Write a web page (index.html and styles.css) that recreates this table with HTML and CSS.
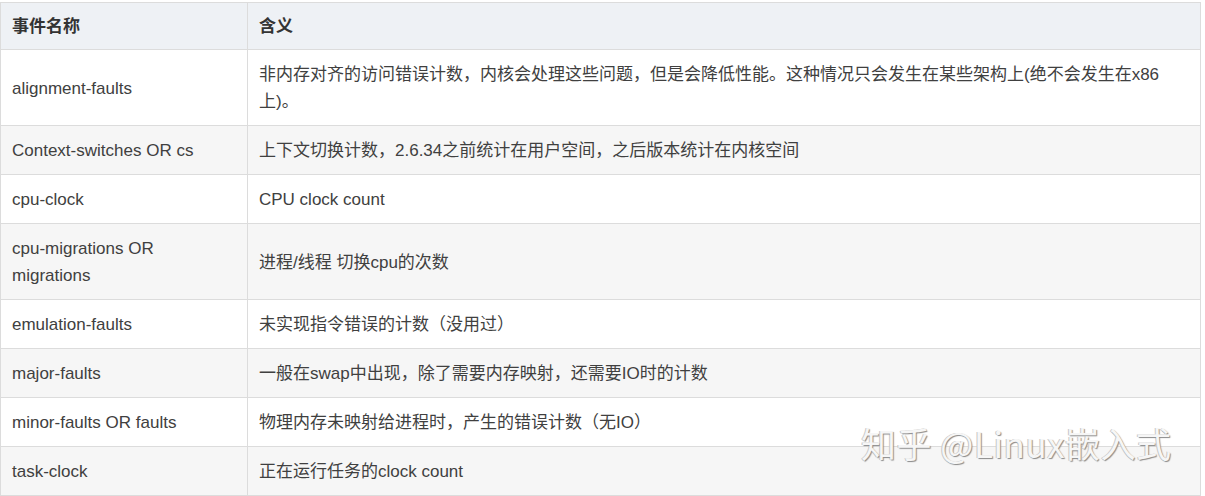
FILE: index.html
```html
<!DOCTYPE html>
<html lang="zh-CN">
<head>
<meta charset="utf-8">
<title>perf events</title>
<link rel="stylesheet" href="styles.css">
</head>
<body>
<div class="page">
  <table class="events">
    <thead>
      <tr><th class="c1">事件名称</th><th>含义</th></tr>
    </thead>
    <tbody>
      <tr><td class="c1">alignment-faults</td><td>非内存对齐的访问错误计数，内核会处理这些问题，但是会降低性能。这种情况只会发生在某些架构上(绝不会发生在x86上)。</td></tr>
      <tr><td class="c1">Context-switches OR cs</td><td>上下文切换计数，2.6.34之前统计在用户空间，之后版本统计在内核空间</td></tr>
      <tr><td class="c1">cpu-clock</td><td>CPU clock count</td></tr>
      <tr><td class="c1">cpu-migrations OR migrations</td><td>进程/线程 切换cpu的次数</td></tr>
      <tr><td class="c1">emulation-faults</td><td>未实现指令错误的计数（没用过）</td></tr>
      <tr><td class="c1">major-faults</td><td>一般在swap中出现，除了需要内存映射，还需要IO时的计数</td></tr>
      <tr><td class="c1">minor-faults OR faults</td><td>物理内存未映射给进程时，产生的错误计数（无IO）</td></tr>
      <tr><td class="c1">task-clock</td><td>正在运行任务的clock count</td></tr>
    </tbody>
  </table>
  <div class="watermark">知乎 @Linux嵌入式</div>
</div>
</body>
</html>
```

FILE: styles.css
```css
html, body {
  margin: 0;
  padding: 0;
  background: #ffffff;
}
.page {
  position: relative;
  width: 1205px;
  height: 496px;
  overflow: hidden;
  padding-top: 2px;
  box-sizing: border-box;
}
.events {
  width: 1201px;
  border-collapse: collapse;
  table-layout: fixed;
  font-family: "Liberation Sans", "Noto Sans CJK SC", sans-serif;
  font-size: 17px;
  color: #404040;
}
.events th,
.events td {
  border: 1px solid #dcdcdc;
  padding: 11px 10px 10px 11px;
  line-height: 27px;
  text-align: left;
  vertical-align: middle;
}
.events th {
  background: #eef1f5;
  font-weight: bold;
  color: #333;
  padding-top: 10px;
  padding-bottom: 9px;
}
.events .c1 {
  width: 221px;
  padding-left: 11px;
  padding-right: 14px;
}
.events tbody tr:nth-child(even) td {
  background: #f6f6f6;
}
.events tbody tr:nth-child(odd) td {
  background: #ffffff;
}
.watermark {
  position: absolute;
  left: 861px;
  top: 417px;
  font-family: "Noto Sans CJK SC", "Liberation Sans", sans-serif;
  font-size: 35px;
  letter-spacing: 0.5px;
  color: #f6f6f6;
  text-shadow: 1px 1px 1px #8a8a8a, -1px 0 0 #c8c8c8;
  white-space: nowrap;
}
```
